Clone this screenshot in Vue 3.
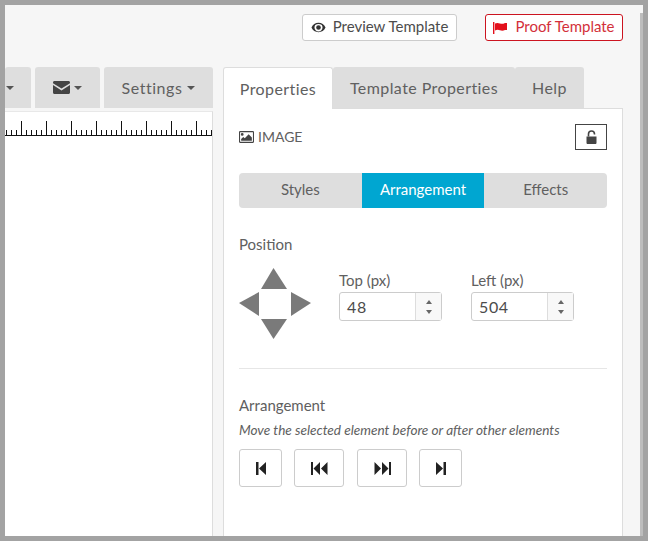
<script setup>
const minor = [];
const major = [];
for (let x = 1; x < 210; x += 5) {
  if ((x - 1) % 25 === 15) major.push(x);
  else minor.push(x);
}
</script>

<template>
  <div class="frame">
    <header class="topbar">
      <button class="btn preview">
        <svg class="ic-eye" viewBox="0 0 16 16"><path d="M8 3C4.600 3 1.800 5 .5 8c1.300 3 4.100 5 7.500 5s6.200-2 7.500-5C14.200 5 11.400 3 8 3zm0 1.200c1.300 0 2.500.4 3.500 1.100.5.700.8 1.600.8 2.700 0 2.400-1.900 4.200-4.300 4.200S3.700 10.400 3.700 8c0-1.100.3-2 .8-2.700C5.500 4.600 6.700 4.200 8 4.200zM8 5.500A2.500 2.500 0 1 0 8 10.500 2.500 2.500 0 0 0 8 5.500z" fill-rule="evenodd"/></svg>
        <span>Preview Template</span>
      </button>
      <button class="btn proof">
        <svg class="ic-flag" viewBox="0 0 14 12"><rect x="0" y="0" width="1.400" height="12"/><path d="M2 1.500c2-1 3.500-.5 5 0s3 .5 5-.5h2v7h-2c-2 1-3.500.8-5 .3s-3-.8-5 .2z"/></svg>
        <span>Proof Template</span>
      </button>
    </header>

    <main class="workspace">
      <section class="editor">
        <nav class="toolbar">
          <div class="tool first"><span class="caret"></span></div>
          <div class="tool mail">
            <svg class="ic-mail" viewBox="0 0 16 12" preserveAspectRatio="none"><path d="M0 1.400C0 .6.600 0 1.400 0h13.200C15.400 0 16 .6 16 1.400V2L8 7 0 2zM0 3.700l8 5 8-5v6.900c0 .8-.6 1.400-1.400 1.400H1.400C.6 12 0 11.400 0 10.600z"/></svg>
            <span class="caret"></span>
          </div>
          <div class="tool settings">Settings<span class="caret"></span></div>
        </nav>
        <div class="canvas">
          <svg class="ruler" width="207" height="26" viewBox="0 0 207 26">
            <line x1="0" y1="23.500" x2="207" y2="23.500" />
            <line v-for="x in minor" :key="'m' + x" :x1="x + 0.500" :x2="x + 0.500" y1="18" y2="23" />
            <line v-for="x in major" :key="'M' + x" :x1="x + 0.500" :x2="x + 0.500" y1="9" y2="23" />
          </svg>
        </div>
      </section>

      <section class="side">
        <div class="tabs">
          <div class="tab active">Properties</div>
          <div class="tab">Template Properties</div>
          <div class="tab">Help</div>
        </div>
        <div class="panel">
          <div class="panel-head">
            <div class="title">
              <svg class="ic-image" viewBox="0 0 14 11"><path fill-rule="evenodd" d="M1 0h12a1 1 0 0 1 1 1v9a1 1 0 0 1-1 1H1a1 1 0 0 1-1-1V1a1 1 0 0 1 1-1zm0 1v9h12V1zm2 .8a1.300 1.300 0 1 1 0 2.600 1.300 1.300 0 0 1 0-2.600zM2 9V7.300l2-1.800 1.400 1.200L9 3l3 3v3z"/></svg>
              <span>IMAGE</span>
            </div>
            <button class="lock">
              <svg class="ic-lock" viewBox="0 0 11 14"><path d="M.5 6.500h10v6.200c0 .7-.5 1.300-1.200 1.300H1.700C1 14 .5 13.400 .5 12.700z"/><path d="M2.500 6.500V4a3 3 0 0 1 6 0v.6" fill="none" stroke="#444" stroke-width="1.600"/></svg>
            </button>
          </div>

          <div class="segments">
            <div class="segment">Styles</div>
            <div class="segment on">Arrangement</div>
            <div class="segment">Effects</div>
          </div>

          <div class="label pos-label">Position</div>
          <div class="position">
            <svg class="arrows" viewBox="0 0 72 72" width="72" height="72">
              <path d="M34.500 0 48 21H22z"/>
              <path d="M34.500 71 22 51H48z"/>
              <path d="M0 35 20 24V48z"/>
              <path d="M72 35 52 48V24z"/>
            </svg>
            <div class="field">
              <label>Top (px)</label>
              <div class="spin">
                <span class="val">48</span>
                <span class="spin-btns"><i class="up"></i><i class="down"></i></span>
              </div>
            </div>
            <div class="field">
              <label>Left (px)</label>
              <div class="spin">
                <span class="val">504</span>
                <span class="spin-btns"><i class="up"></i><i class="down"></i></span>
              </div>
            </div>
          </div>

          <hr class="rule" />

          <div class="label arr-label">Arrangement</div>
          <p class="hint">Move the selected element before or after other elements</p>
          <div class="order">
            <button class="ord narrow">
              <svg viewBox="0 0 10 12" width="10" height="13" preserveAspectRatio="none"><path d="M0 0h2.500v12H0zM10 0v12L3 6z"/></svg>
            </button>
            <button class="ord wide">
              <svg viewBox="0 0 17 12" width="17" height="13" preserveAspectRatio="none"><path d="M0 0h2v12H0zM9 0v12L2.500 6zM16.500 0v12L10 6z"/></svg>
            </button>
            <button class="ord wide">
              <svg viewBox="0 0 17 12" width="17" height="13" preserveAspectRatio="none"><path d="M17 0h-2v12h2zM8 0v12l6.500-6zM.5 0v12L7 6z"/></svg>
            </button>
            <button class="ord narrow">
              <svg viewBox="0 0 10 12" width="10" height="13" preserveAspectRatio="none"><path d="M10 0H7.500v12H10zM0 0v12l7-6z"/></svg>
            </button>
          </div>
        </div>
      </section>
    </main>
  </div>
</template>

<style>
html, body { margin: 0; background: #a3a3a3; }
</style>

<style scoped>
.frame {
  box-sizing: border-box;
  width: 648px;
  height: 541px;
  border: 5px solid #a3a3a3;
  background: linear-gradient(#bdbdbd, #bdbdbd) right 8px / 3px 100% no-repeat, #f6f6f6;
  overflow: hidden;
  font-family: Lato, "Noto Sans", sans-serif;
  color: #606060;
  font-size: 15px;
}
.topbar {
  display: flex;
  justify-content: flex-end;
  gap: 28px;
  padding: 9px 20px 0 0;
  height: 62px;
  box-sizing: border-box;
}
.btn {
  display: flex;
  align-items: center;
  justify-content: center;
  gap: 7px;
  height: 27px;
  padding: 0 0 3px;
  box-sizing: border-box;
  border-radius: 3px;
  background: #fff;
  font: inherit;
  font-size: 15px;
}
.btn svg { margin-top: 3px; }
.preview { width: 155px; border: 1px solid #ccc; color: #4c4c4c; }
.proof { width: 138px; border: 1px solid #cc1420; color: #d3303a; gap: 8px; }
.ic-eye { width: 15px; height: 15px; fill: #333; }
.ic-flag { width: 14px; height: 12px; fill: #e3101c; }
.workspace { display: flex; align-items: flex-start; }
.editor { width: 208px; margin-right: 10px; }
.toolbar { display: flex; gap: 4px; height: 41px; }
.tool {
  display: flex;
  align-items: center;
  justify-content: center;
  gap: 5px;
  height: 41px;
  box-sizing: border-box;
  background: #dedede;
  border-radius: 3px 3px 0 0;
  font-size: 16px;
  color: #606060;
}
.first { width: 26px; justify-content: flex-start; padding-left: 1px; }
.mail { width: 65px; gap: 4px; }
.settings { width: 109px; gap: 5px; letter-spacing: .55px; }
.caret {
  display: inline-block;
  width: 0;
  height: 0;
  border-left: 4.500px solid transparent;
  border-right: 4.500px solid transparent;
  border-top: 4.500px solid #555;
}
.ic-mail { width: 17px; height: 13px; fill: #444; }
.canvas {
  margin-top: 3px;
  height: 425px;
  box-sizing: border-box;
  background: #fff;
  border-right: 1px solid #ddd;
  border-top: 1px solid #e8e8e8;
}
.ruler { display: block; }
.ruler line { stroke: #111; stroke-width: 1; }
.side { width: 400px; }
.tabs { display: flex; height: 41px; }
.tab {
  display: flex;
  align-items: center;
  justify-content: center;
  height: 41px;
  box-sizing: border-box;
  background: #dedede;
  border-radius: 3px 3px 0 0;
  font-size: 16px;
  letter-spacing: .42px;
  color: #606060;
}
.tab:nth-child(2) { width: 182px; }
.tab:nth-child(3) { width: 69px; }
.tab.active {
  width: 110px;
  background: #fff;
  border: 1px solid #ddd;
  border-bottom: 0;
  height: 42px;
  padding-bottom: 1px;
  position: relative;
  z-index: 1;
}
.panel {
  box-sizing: border-box;
  width: 400px;
  height: 428px;
  padding: 15px 15px 0 15px;
  background: #fff;
  border: solid #ddd;
  border-width: 1px 1px 0 1px;
}
.panel-head { display: flex; align-items: center; justify-content: space-between; height: 26px; }
.title { display: flex; align-items: center; gap: 4px; font-size: 14px; color: #606060; }
.title span { padding-bottom: 2px; }
.ic-image { width: 15px; height: 12px; fill: #444; }
.lock {
  display: flex;
  align-items: center;
  justify-content: center;
  width: 32px;
  height: 26px;
  padding: 0;
  background: #fff;
  border: 1px solid #444;
}
.ic-lock { width: 11px; height: 14px; fill: #444; }
.segments {
  display: flex;
  margin-top: 23px;
  height: 35px;
  background: #dedede;
  border-radius: 4px;
  overflow: hidden;
}
.segment {
  flex: 1;
  display: flex;
  align-items: center;
  justify-content: center;
  padding-bottom: 3px;
  font-size: 15px;
  color: #606060;
}
.segment.on { background: #00a6d1; color: #fff; }
.label { font-size: 15px; color: #606060; line-height: 18px; }
.pos-label { margin-top: 27px; }
.position { display: flex; align-items: flex-start; margin-top: 15px; }
.arrows { fill: #7a7a7a; flex: none; margin-right: 28px; }
.field { display: flex; flex-direction: column; margin-right: 29px; }
.field label { font-size: 15px; line-height: 17px; color: #606060; margin-top: 4px; }
.spin {
  display: flex;
  width: 103px;
  height: 29px;
  box-sizing: border-box;
  border: 1px solid #ccc;
  border-radius: 3px;
  margin-top: 3px;
}
.val {
  flex: 1;
  padding-left: 7px;
  line-height: 27px;
  font-size: 16px;
  letter-spacing: .6px;
  color: #4c4c4c;
}
.spin-btns {
  display: flex;
  flex-direction: column;
  align-items: center;
  justify-content: center;
  gap: 6px;
  width: 25px;
  background: #f8f8f8;
  border-left: 1px solid #ddd;
}
.spin-btns i { display: block; width: 0; height: 0; border-left: 3.500px solid transparent; border-right: 3.500px solid transparent; }
.up { border-bottom: 4px solid #666; }
.down { border-top: 4px solid #666; }
.rule { border: 0; border-top: 1px solid #e6e6e6; margin: 28px 0 0; }
.arr-label { margin-top: 27px; }
.hint { margin: 8px 0 0; font-size: 13.600px; line-height: 16px; color: #606060; font-style: italic; }
.order { display: flex; gap: 12px; margin-top: 11px; }
.wide + .wide { margin-left: 1px; }
.ord {
  display: flex;
  align-items: center;
  justify-content: center;
  height: 38px;
  padding: 0;
  background: #fff;
  border: 1px solid #ccc;
  border-radius: 3px;
}
.ord svg { fill: #222; }
.narrow { width: 43px; }
.wide { width: 50px; }
</style>
